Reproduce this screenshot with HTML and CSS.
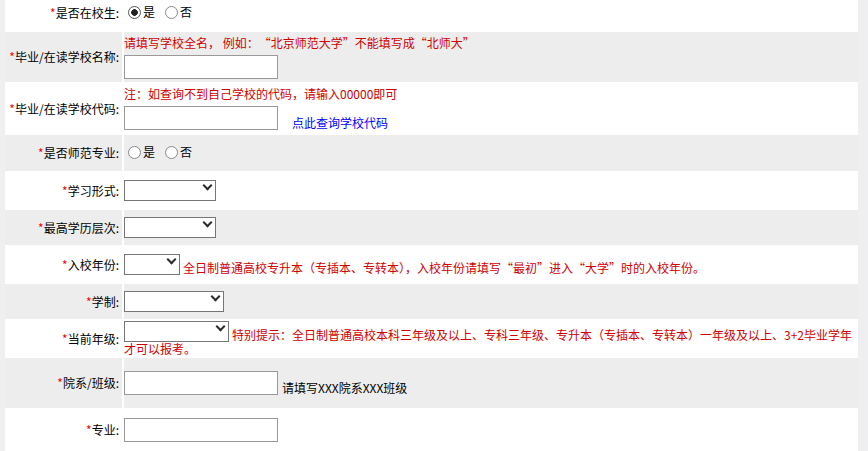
FILE: index.html
```html
<!DOCTYPE html>
<html lang="zh-CN">
<head>
<meta charset="utf-8">
<title>报名信息</title>
<link rel="stylesheet" href="styles.css">
</head>
<body>
<table class="form">
  <tr class="h32">
    <td class="label first"><span class="req">*</span>是否在校生:</td>
    <td class="field first"><label class="opt"><input type="radio" name="zx" class="radio" checked>是</label><label class="opt"><input type="radio" name="zx" class="radio">否</label></td>
  </tr>
  <tr class="h50">
    <td class="label"><span class="req">*</span>毕业/在读学校名称:</td>
    <td class="field">
      <div class="hint">请填写学校全名， 例如：<span class="ql">“</span>北京师范大学<span class="qr">”</span>不能填写成<span class="ql">“</span>北师大<span class="qr">”</span></div>
      <div class="below"><input type="text" class="text"></div>
    </td>
  </tr>
  <tr class="h53">
    <td class="label"><span class="req">*</span>毕业/在读学校代码:</td>
    <td class="field">
      <div class="hint">注：如查询不到自己学校的代码，请输入00000即可</div>
      <div class="below"><input type="text" class="text"><a href="#" class="link">点此查询学校代码</a></div>
    </td>
  </tr>
  <tr class="h36">
    <td class="label"><span class="req">*</span>是否师范专业:</td>
    <td class="field"><label class="opt"><input type="radio" name="sf" class="radio">是</label><label class="opt"><input type="radio" name="sf" class="radio">否</label></td>
  </tr>
  <tr class="h39">
    <td class="label"><span class="req">*</span>学习形式:</td>
    <td class="field"><span class="sel"><select class="w92"><option></option></select></span></td>
  </tr>
  <tr class="h35">
    <td class="label"><span class="req">*</span>最高学历层次:</td>
    <td class="field"><span class="sel"><select class="w92"><option></option></select></span></td>
  </tr>
  <tr class="h39">
    <td class="label"><span class="req">*</span>入校年份:</td>
    <td class="field"><span class="sel"><select class="w56"><option></option></select></span><span class="hint inline">全日制普通高校专升本（专插本、专转本），入校年份请填写<span class="ql">“</span>最初<span class="qr">”</span>进入<span class="ql">“</span>大学<span class="qr">”</span>时的入校年份。</span></td>
  </tr>
  <tr class="h35">
    <td class="label"><span class="req">*</span>学制:</td>
    <td class="field"><span class="sel"><select class="w100"><option></option></select></span></td>
  </tr>
  <tr class="h39">
    <td class="label"><span class="req">*</span>当前年级:</td>
    <td class="field wrap"><span class="sel"><select class="w105"><option></option></select></span><span class="hint inline">特别提示：全日制普通高校本科三年级及以上、专科三年级、专升本（专插本、专转本）一年级及以上、3+2毕业学年才可以报考。</span></td>
  </tr>
  <tr class="h50">
    <td class="label"><span class="req">*</span>院系/班级:</td>
    <td class="field"><input type="text" class="text"><span class="note">请填写XXX院系XXX班级</span></td>
  </tr>
  <tr class="h43">
    <td class="label"><span class="req">*</span>专业:</td>
    <td class="field"><input type="text" class="text"></td>
  </tr>
</table>
</body>
</html>
```

FILE: styles.css
```css
html, body {
  margin: 0;
  padding: 0;
}
body {
  background: #efeff1;
  font-family: "Noto Sans CJK SC", "Liberation Sans", sans-serif;
  font-size: 12px;
  color: #000;
  padding-left: 5px;
}
.form {
  width: 853px;
  border-collapse: separate;
  border-spacing: 0;
  background: #fff;
}
.form td {
  padding: 0;
  vertical-align: middle;
  line-height: 14px;
}
.form tr:nth-child(even) td {
  background: #ededed;
}
.h32 { height: 32px; }
.h35 { height: 35px; }
.h36 { height: 36px; }
.h39 { height: 39px; }
.h43 { height: 43px; }
.h50 { height: 50px; }
.h53 { height: 53px; }

.form td.label {
  width: 114px;
  padding-right: 3px;
  border-right: 2px solid #fff;
  text-align: right;
  white-space: nowrap;
}
.form td.first {
  padding-bottom: 6px;
}
.form td.field {
  padding-right: 5px;
}
.form td.wrap {
  vertical-align: top;
  padding-top: 2px;
}
.req {
  color: #f00;
}
.hint {
  color: #d00000;
}
.ql, .qr {
  display: inline-block;
  width: 12px;
}
.ql { text-align: right; }
.qr { text-align: left; }
.hint.inline {
  margin-left: 3px;
}
.below {
  margin-top: 5px;
  height: 24px;
  display: flex;
  align-items: flex-end;
}
.opt {
  display: inline-flex;
  align-items: center;
  margin-right: 10px;
}
.opt:first-child {
  margin-left: 4px;
}
.radio {
  appearance: none;
  -webkit-appearance: none;
  width: 13px;
  height: 13px;
  margin: 0 2px 0 0;
  border: 1px solid #8a8a8a;
  border-radius: 50%;
  background: #fff;
  box-sizing: border-box;
}
.radio:checked {
  background: radial-gradient(circle, #222 0 3px, #fff 3.6px);
  border-color: #555;
}
.text {
  width: 154px;
  height: 24px;
  box-sizing: border-box;
  border: 1px solid #999;
  margin: 0;
  padding: 1px 3px;
  background: #fff;
  vertical-align: bottom;
  font: inherit;
}
.link {
  color: #0000ff;
  text-decoration: none;
  margin-left: 14px;
  line-height: 14px;
}
.note {
  margin-left: 4px;
}
.sel {
  position: relative;
  display: inline-flex;
  vertical-align: bottom;
}
.sel::after {
  content: "";
  position: absolute;
  right: 5px;
  top: 2px;
  width: 5px;
  height: 5px;
  border-right: 2px solid #2b2b2b;
  border-bottom: 2px solid #2b2b2b;
  transform: rotate(45deg);
  pointer-events: none;
}
.sel select {
  appearance: none;
  -webkit-appearance: none;
  height: 21px;
  box-sizing: border-box;
  border: 1px solid #767676;
  border-radius: 0;
  background: #fff;
  margin: 0;
  padding: 0 2px;
  font: inherit;
}
.w56 { width: 56px; }
.w92 { width: 92px; }
.w100 { width: 100px; }
.w105 { width: 105px; }
```
